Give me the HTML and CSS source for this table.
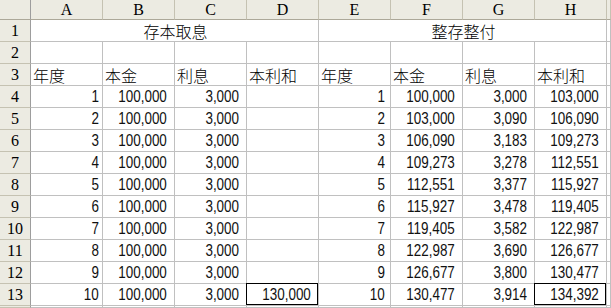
FILE: index.html
```html
<!DOCTYPE html>
<html lang="zh-Hant">
<head>
<meta charset="utf-8">
<title>存本取息 / 整存整付</title>
<link rel="stylesheet" href="styles.css">
</head>
<body>
<div class="sheet">
  <div class="hd corner"></div>
  <div class="hd col">A</div><div class="hd col">B</div><div class="hd col">C</div><div class="hd col">D</div>
  <div class="hd col">E</div><div class="hd col">F</div><div class="hd col">G</div><div class="hd col">H</div>
  <div class="hd col last"></div>

  <div class="hd row">1</div>
  <div class="c title span4">存本取息</div><div class="c title span4">整存整付</div><div class="c"></div>

  <div class="hd row">2</div>
  <div class="c"></div><div class="c"></div><div class="c"></div><div class="c"></div>
  <div class="c"></div><div class="c"></div><div class="c"></div><div class="c"></div><div class="c"></div>

  <div class="hd row">3</div>
  <div class="c txt">年度</div><div class="c txt">本金</div><div class="c txt">利息</div><div class="c txt">本利和</div>
  <div class="c txt">年度</div><div class="c txt">本金</div><div class="c txt">利息</div><div class="c txt">本利和</div><div class="c"></div>

  <div class="hd row">4</div>
  <div class="c n gen"><span>1</span></div><div class="c n"><span>100,000</span></div><div class="c n"><span>3,000</span></div><div class="c n"></div>
  <div class="c n gen2"><span>1</span></div><div class="c n"><span>100,000</span></div><div class="c n"><span>3,000</span></div><div class="c n"><span>103,000</span></div><div class="c"></div>

  <div class="hd row">5</div>
  <div class="c n gen"><span>2</span></div><div class="c n"><span>100,000</span></div><div class="c n"><span>3,000</span></div><div class="c n"></div>
  <div class="c n gen2"><span>2</span></div><div class="c n"><span>103,000</span></div><div class="c n"><span>3,090</span></div><div class="c n"><span>106,090</span></div><div class="c"></div>

  <div class="hd row">6</div>
  <div class="c n gen"><span>3</span></div><div class="c n"><span>100,000</span></div><div class="c n"><span>3,000</span></div><div class="c n"></div>
  <div class="c n gen2"><span>3</span></div><div class="c n"><span>106,090</span></div><div class="c n"><span>3,183</span></div><div class="c n"><span>109,273</span></div><div class="c"></div>

  <div class="hd row">7</div>
  <div class="c n gen"><span>4</span></div><div class="c n"><span>100,000</span></div><div class="c n"><span>3,000</span></div><div class="c n"></div>
  <div class="c n gen2"><span>4</span></div><div class="c n"><span>109,273</span></div><div class="c n"><span>3,278</span></div><div class="c n"><span>112,551</span></div><div class="c"></div>

  <div class="hd row">8</div>
  <div class="c n gen"><span>5</span></div><div class="c n"><span>100,000</span></div><div class="c n"><span>3,000</span></div><div class="c n"></div>
  <div class="c n gen2"><span>5</span></div><div class="c n"><span>112,551</span></div><div class="c n"><span>3,377</span></div><div class="c n"><span>115,927</span></div><div class="c"></div>

  <div class="hd row">9</div>
  <div class="c n gen"><span>6</span></div><div class="c n"><span>100,000</span></div><div class="c n"><span>3,000</span></div><div class="c n"></div>
  <div class="c n gen2"><span>6</span></div><div class="c n"><span>115,927</span></div><div class="c n"><span>3,478</span></div><div class="c n"><span>119,405</span></div><div class="c"></div>

  <div class="hd row">10</div>
  <div class="c n gen"><span>7</span></div><div class="c n"><span>100,000</span></div><div class="c n"><span>3,000</span></div><div class="c n"></div>
  <div class="c n gen2"><span>7</span></div><div class="c n"><span>119,405</span></div><div class="c n"><span>3,582</span></div><div class="c n"><span>122,987</span></div><div class="c"></div>

  <div class="hd row">11</div>
  <div class="c n gen"><span>8</span></div><div class="c n"><span>100,000</span></div><div class="c n"><span>3,000</span></div><div class="c n"></div>
  <div class="c n gen2"><span>8</span></div><div class="c n"><span>122,987</span></div><div class="c n"><span>3,690</span></div><div class="c n"><span>126,677</span></div><div class="c"></div>

  <div class="hd row">12</div>
  <div class="c n gen"><span>9</span></div><div class="c n"><span>100,000</span></div><div class="c n"><span>3,000</span></div><div class="c n"></div>
  <div class="c n gen2"><span>9</span></div><div class="c n"><span>126,677</span></div><div class="c n"><span>3,800</span></div><div class="c n"><span>130,477</span></div><div class="c"></div>

  <div class="hd row">13</div>
  <div class="c n gen"><span>10</span></div><div class="c n"><span>100,000</span></div><div class="c n"><span>3,000</span></div><div class="c n boxed"><span>130,000</span></div>
  <div class="c n gen2"><span>10</span></div><div class="c n"><span>130,477</span></div><div class="c n"><span>3,914</span></div><div class="c n boxed"><span>134,392</span></div><div class="c"></div>

  <div class="hd row"></div>
  <div class="c"></div><div class="c"></div><div class="c"></div><div class="c"></div>
  <div class="c"></div><div class="c"></div><div class="c"></div><div class="c"></div><div class="c"></div>
</div>
</body>
</html>
```

FILE: styles.css
```css
* { box-sizing: border-box; }
html, body { margin: 0; padding: 0; background: #fff; }
body { width: 611px; height: 308px; overflow: hidden; }

.sheet {
  display: grid;
  grid-template-columns: 31px repeat(8, 72px) 1fr;
  grid-template-rows: 20px repeat(13, 22px) 1fr;
  width: 611px;
  height: 308px;
  overflow: hidden;
  font-family: "Noto Sans CJK TC", "Noto Sans CJK SC", sans-serif;
  font-weight: 300;
  font-size: 16px;
  color: #000;
}

.hd {
  background: #ecebe2;
  font-family: "Liberation Serif", serif;
  font-weight: 400;
  font-size: 16px;
  color: #000;
  display: flex;
  align-items: center;
  justify-content: center;
  border-right: 1px solid #c5c2b2;
  border-bottom: 1px solid #c5c2b2;
}
.hd.col { border-bottom-color: #aca899; }
.hd.corner { border-bottom-color: #aca899; border-right-color: #9d9d9d; }
.hd.row { border-right-color: #9d9d9d; padding-top: 1px; }

.c {
  border-right: 1px solid #c0c0c0;
  border-bottom: 1px solid #c0c0c0;
  display: flex;
  align-items: flex-end;
  white-space: nowrap;
  line-height: 20px;
  position: relative;
  min-height: 0;
}
.span4 { grid-column: span 4; }
.title { justify-content: center; padding-left: 2px; }
.txt { padding-left: 2px; }

.n {
  justify-content: flex-end;
  padding-right: 7px;
  font-family: "Liberation Sans", sans-serif;
  font-weight: 400;
  font-size: 16px;
  color: #111;
}
.n span {
  display: inline-block;
  transform: scaleX(0.84);
  transform-origin: right bottom;
}
.n.gen { padding-right: 3px; }
.n.gen2 { padding-right: 5px; }

.boxed::after {
  content: "";
  position: absolute;
  left: -1px;
  top: -1px;
  right: 0;
  bottom: 0;
  border: 1px solid #000;
}
```
